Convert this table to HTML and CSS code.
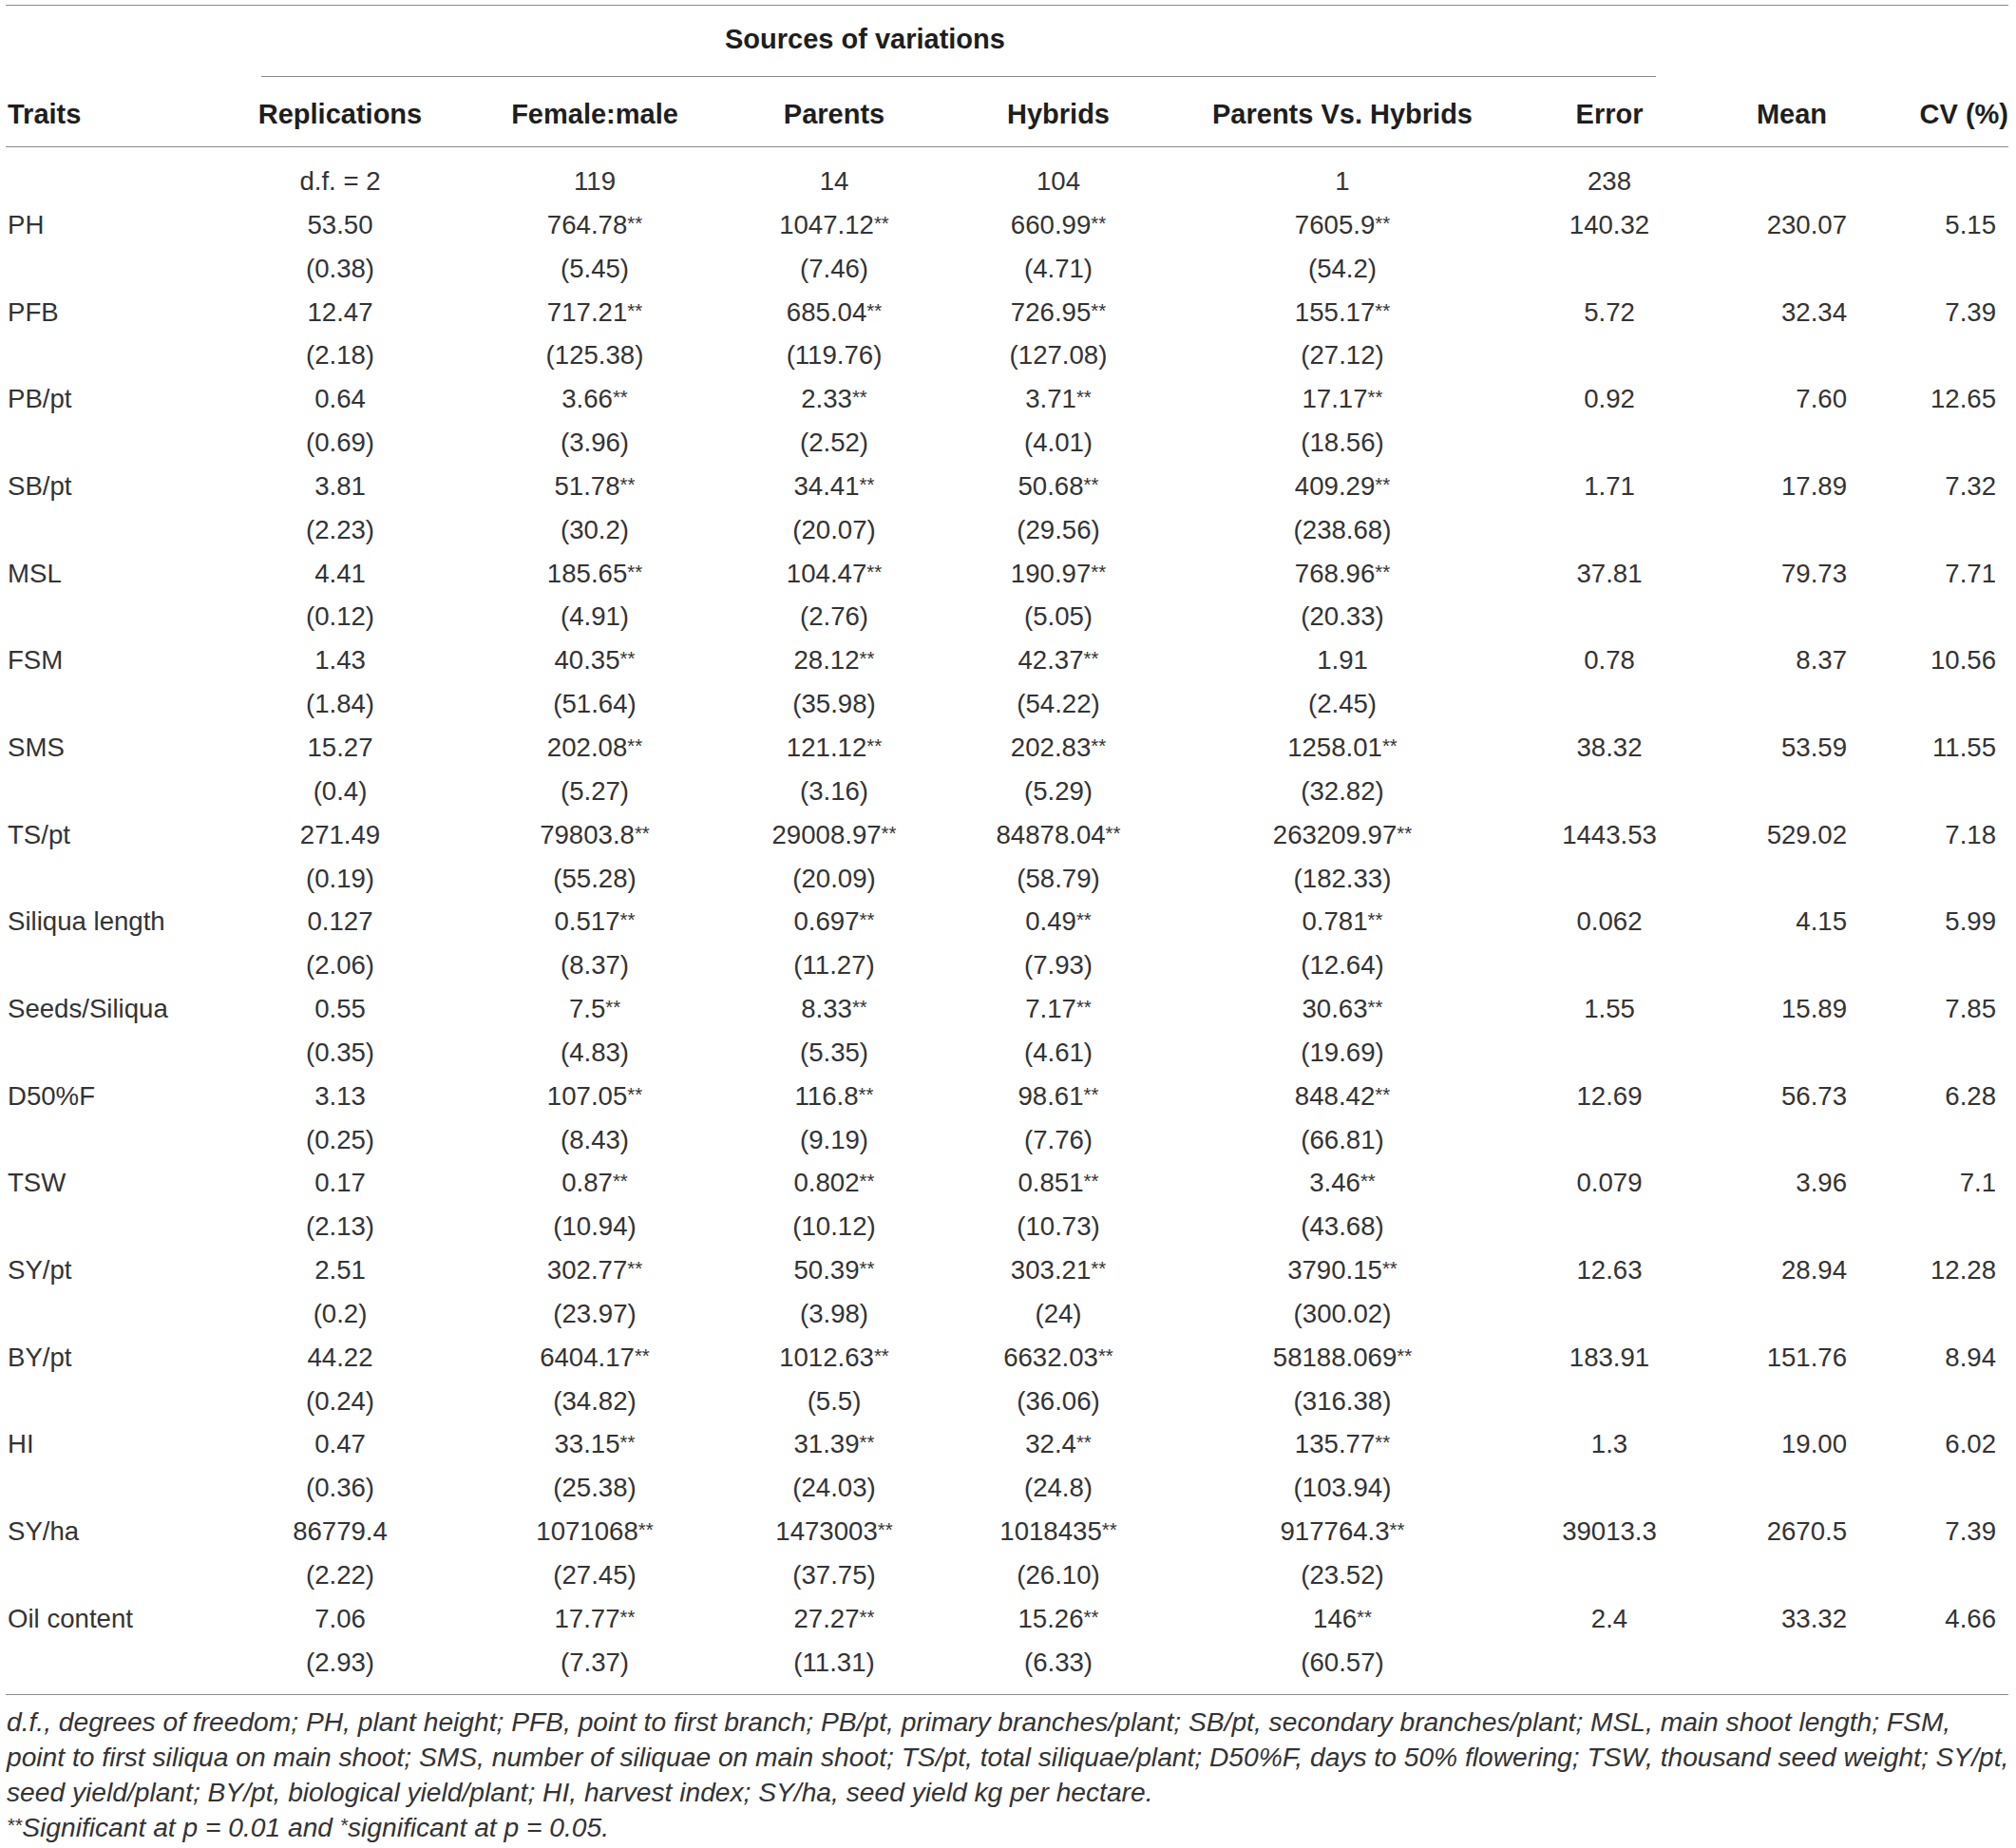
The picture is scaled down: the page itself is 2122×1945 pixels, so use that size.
FILE: index.html
```html
<!DOCTYPE html>
<html lang="en">
<head>
<meta charset="utf-8">
<title>Analysis of variance</title>
<link rel="stylesheet" href="styles.css">
</head>
<body>
<div class="page">
<table class="anova">
  <colgroup>
    <col class="c-trait"><col class="c-rep"><col class="c-fm"><col class="c-par"><col class="c-hyb"><col class="c-pvh"><col class="c-err"><col class="c-mean"><col class="c-cv">
  </colgroup>
  <thead>
    <tr class="h1">
      <th></th>
      <th colspan="6"><div class="span-title">Sources of variations</div></th>
      <th></th>
      <th></th>
    </tr>
    <tr class="h2">
      <th class="l">Traits</th>
      <th>Replications</th>
      <th>Female:male</th>
      <th>Parents</th>
      <th>Hybrids</th>
      <th>Parents Vs. Hybrids</th>
      <th>Error</th>
      <th class="mean-h">Mean</th>
      <th class="cv-h">CV (%)</th>
    </tr>
  </thead>
  <tbody>
    <tr class="first"><td class="l"></td><td>d.f. = 2</td><td>119</td><td>14</td><td>104</td><td>1</td><td>238</td><td class="mean"></td><td class="cv"></td></tr>
    <tr><td class="l">PH</td><td>53.50</td><td>764.78<sup>**</sup></td><td>1047.12<sup>**</sup></td><td>660.99<sup>**</sup></td><td>7605.9<sup>**</sup></td><td>140.32</td><td class="mean">230.07</td><td class="cv">5.15</td></tr>
    <tr><td class="l"></td><td>(0.38)</td><td>(5.45)</td><td>(7.46)</td><td>(4.71)</td><td>(54.2)</td><td></td><td class="mean"></td><td class="cv"></td></tr>
    <tr><td class="l">PFB</td><td>12.47</td><td>717.21<sup>**</sup></td><td>685.04<sup>**</sup></td><td>726.95<sup>**</sup></td><td>155.17<sup>**</sup></td><td>5.72</td><td class="mean">32.34</td><td class="cv">7.39</td></tr>
    <tr><td class="l"></td><td>(2.18)</td><td>(125.38)</td><td>(119.76)</td><td>(127.08)</td><td>(27.12)</td><td></td><td class="mean"></td><td class="cv"></td></tr>
    <tr><td class="l">PB/pt</td><td>0.64</td><td>3.66<sup>**</sup></td><td>2.33<sup>**</sup></td><td>3.71<sup>**</sup></td><td>17.17<sup>**</sup></td><td>0.92</td><td class="mean">7.60</td><td class="cv">12.65</td></tr>
    <tr><td class="l"></td><td>(0.69)</td><td>(3.96)</td><td>(2.52)</td><td>(4.01)</td><td>(18.56)</td><td></td><td class="mean"></td><td class="cv"></td></tr>
    <tr><td class="l">SB/pt</td><td>3.81</td><td>51.78<sup>**</sup></td><td>34.41<sup>**</sup></td><td>50.68<sup>**</sup></td><td>409.29<sup>**</sup></td><td>1.71</td><td class="mean">17.89</td><td class="cv">7.32</td></tr>
    <tr><td class="l"></td><td>(2.23)</td><td>(30.2)</td><td>(20.07)</td><td>(29.56)</td><td>(238.68)</td><td></td><td class="mean"></td><td class="cv"></td></tr>
    <tr><td class="l">MSL</td><td>4.41</td><td>185.65<sup>**</sup></td><td>104.47<sup>**</sup></td><td>190.97<sup>**</sup></td><td>768.96<sup>**</sup></td><td>37.81</td><td class="mean">79.73</td><td class="cv">7.71</td></tr>
    <tr><td class="l"></td><td>(0.12)</td><td>(4.91)</td><td>(2.76)</td><td>(5.05)</td><td>(20.33)</td><td></td><td class="mean"></td><td class="cv"></td></tr>
    <tr><td class="l">FSM</td><td>1.43</td><td>40.35<sup>**</sup></td><td>28.12<sup>**</sup></td><td>42.37<sup>**</sup></td><td>1.91</td><td>0.78</td><td class="mean">8.37</td><td class="cv">10.56</td></tr>
    <tr><td class="l"></td><td>(1.84)</td><td>(51.64)</td><td>(35.98)</td><td>(54.22)</td><td>(2.45)</td><td></td><td class="mean"></td><td class="cv"></td></tr>
    <tr><td class="l">SMS</td><td>15.27</td><td>202.08<sup>**</sup></td><td>121.12<sup>**</sup></td><td>202.83<sup>**</sup></td><td>1258.01<sup>**</sup></td><td>38.32</td><td class="mean">53.59</td><td class="cv">11.55</td></tr>
    <tr><td class="l"></td><td>(0.4)</td><td>(5.27)</td><td>(3.16)</td><td>(5.29)</td><td>(32.82)</td><td></td><td class="mean"></td><td class="cv"></td></tr>
    <tr><td class="l">TS/pt</td><td>271.49</td><td>79803.8<sup>**</sup></td><td>29008.97<sup>**</sup></td><td>84878.04<sup>**</sup></td><td>263209.97<sup>**</sup></td><td>1443.53</td><td class="mean">529.02</td><td class="cv">7.18</td></tr>
    <tr><td class="l"></td><td>(0.19)</td><td>(55.28)</td><td>(20.09)</td><td>(58.79)</td><td>(182.33)</td><td></td><td class="mean"></td><td class="cv"></td></tr>
    <tr><td class="l">Siliqua length</td><td>0.127</td><td>0.517<sup>**</sup></td><td>0.697<sup>**</sup></td><td>0.49<sup>**</sup></td><td>0.781<sup>**</sup></td><td>0.062</td><td class="mean">4.15</td><td class="cv">5.99</td></tr>
    <tr><td class="l"></td><td>(2.06)</td><td>(8.37)</td><td>(11.27)</td><td>(7.93)</td><td>(12.64)</td><td></td><td class="mean"></td><td class="cv"></td></tr>
    <tr><td class="l">Seeds/Siliqua</td><td>0.55</td><td>7.5<sup>**</sup></td><td>8.33<sup>**</sup></td><td>7.17<sup>**</sup></td><td>30.63<sup>**</sup></td><td>1.55</td><td class="mean">15.89</td><td class="cv">7.85</td></tr>
    <tr><td class="l"></td><td>(0.35)</td><td>(4.83)</td><td>(5.35)</td><td>(4.61)</td><td>(19.69)</td><td></td><td class="mean"></td><td class="cv"></td></tr>
    <tr><td class="l">D50%F</td><td>3.13</td><td>107.05<sup>**</sup></td><td>116.8<sup>**</sup></td><td>98.61<sup>**</sup></td><td>848.42<sup>**</sup></td><td>12.69</td><td class="mean">56.73</td><td class="cv">6.28</td></tr>
    <tr><td class="l"></td><td>(0.25)</td><td>(8.43)</td><td>(9.19)</td><td>(7.76)</td><td>(66.81)</td><td></td><td class="mean"></td><td class="cv"></td></tr>
    <tr><td class="l">TSW</td><td>0.17</td><td>0.87<sup>**</sup></td><td>0.802<sup>**</sup></td><td>0.851<sup>**</sup></td><td>3.46<sup>**</sup></td><td>0.079</td><td class="mean">3.96</td><td class="cv">7.1</td></tr>
    <tr><td class="l"></td><td>(2.13)</td><td>(10.94)</td><td>(10.12)</td><td>(10.73)</td><td>(43.68)</td><td></td><td class="mean"></td><td class="cv"></td></tr>
    <tr><td class="l">SY/pt</td><td>2.51</td><td>302.77<sup>**</sup></td><td>50.39<sup>**</sup></td><td>303.21<sup>**</sup></td><td>3790.15<sup>**</sup></td><td>12.63</td><td class="mean">28.94</td><td class="cv">12.28</td></tr>
    <tr><td class="l"></td><td>(0.2)</td><td>(23.97)</td><td>(3.98)</td><td>(24)</td><td>(300.02)</td><td></td><td class="mean"></td><td class="cv"></td></tr>
    <tr><td class="l">BY/pt</td><td>44.22</td><td>6404.17<sup>**</sup></td><td>1012.63<sup>**</sup></td><td>6632.03<sup>**</sup></td><td>58188.069<sup>**</sup></td><td>183.91</td><td class="mean">151.76</td><td class="cv">8.94</td></tr>
    <tr><td class="l"></td><td>(0.24)</td><td>(34.82)</td><td>(5.5)</td><td>(36.06)</td><td>(316.38)</td><td></td><td class="mean"></td><td class="cv"></td></tr>
    <tr><td class="l">HI</td><td>0.47</td><td>33.15<sup>**</sup></td><td>31.39<sup>**</sup></td><td>32.4<sup>**</sup></td><td>135.77<sup>**</sup></td><td>1.3</td><td class="mean">19.00</td><td class="cv">6.02</td></tr>
    <tr><td class="l"></td><td>(0.36)</td><td>(25.38)</td><td>(24.03)</td><td>(24.8)</td><td>(103.94)</td><td></td><td class="mean"></td><td class="cv"></td></tr>
    <tr><td class="l">SY/ha</td><td>86779.4</td><td>1071068<sup>**</sup></td><td>1473003<sup>**</sup></td><td>1018435<sup>**</sup></td><td>917764.3<sup>**</sup></td><td>39013.3</td><td class="mean">2670.5</td><td class="cv">7.39</td></tr>
    <tr><td class="l"></td><td>(2.22)</td><td>(27.45)</td><td>(37.75)</td><td>(26.10)</td><td>(23.52)</td><td></td><td class="mean"></td><td class="cv"></td></tr>
    <tr><td class="l">Oil content</td><td>7.06</td><td>17.77<sup>**</sup></td><td>27.27<sup>**</sup></td><td>15.26<sup>**</sup></td><td>146<sup>**</sup></td><td>2.4</td><td class="mean">33.32</td><td class="cv">4.66</td></tr>
    <tr class="last"><td class="l"></td><td>(2.93)</td><td>(7.37)</td><td>(11.31)</td><td>(6.33)</td><td>(60.57)</td><td></td><td class="mean"></td><td class="cv"></td></tr>
  </tbody>
</table>
<div class="notes">
  <p class="note">d.f., degrees of freedom; PH, plant height; PFB, point to first branch; PB/pt, primary branches/plant; SB/pt, secondary branches/plant; MSL, main shoot length; FSM,<br>point to first siliqua on main shoot; SMS, number of siliquae on main shoot; TS/pt, total siliquae/plant; D50%F, days to 50% flowering; TSW, thousand seed weight; SY/pt,<br>seed yield/plant; BY/pt, biological yield/plant; HI, harvest index; SY/ha, seed yield kg per hectare.</p>
  <p class="note"><sup>**</sup>Significant at p = 0.01 and <sup>*</sup>significant at p = 0.05.</p>
</div>
</div>
</body>
</html>
```

FILE: styles.css
```css
html, body {
  margin: 0;
  padding: 0;
  background: #ffffff;
}

body {
  font-family: "Liberation Sans", Arial, sans-serif;
  color: #333333;
}

.page {
  padding: 5px 0 0 6px;
  width: 2108px;
}

.anova {
  width: 2108px;
  table-layout: fixed;
  border-collapse: collapse;
  border-top: 1px solid #8a8a8a;
  border-bottom: 1px solid #8a8a8a;
  font-size: 27.6px;
}

.c-trait { width: 214px; }
.c-rep { width: 276px; }
.c-fm { width: 260px; }
.c-par { width: 244px; }
.c-hyb { width: 228px; }
.c-pvh { width: 370px; }
.c-err { width: 192px; }
.c-mean { width: 192px; }
.c-cv { width: 132px; }

.anova th {
  padding: 0;
  font-weight: bold;
  font-size: 29px;
  color: #1e1e1e;
  text-align: center;
  vertical-align: top;
  white-space: nowrap;
}

.h1 th {
  height: 75px;
}

.span-title {
  margin: 0 47px 0 55px;
  padding: 0 0 4px 488px;
  line-height: 70px;
  text-align: left;
  border-bottom: 1px solid #8a8a8a;
}

.h2 th {
  padding-top: 5px;
  line-height: 68px;
  border-bottom: 1px solid #8a8a8a;
}

.anova th.l,
.anova td.l {
  text-align: left;
  padding-left: 2px;
}

.anova th.mean-h {
  text-align: center;
}

.anova th.cv-h {
  text-align: right;
  padding-right: 0;
}

.anova td {
  padding: 0;
  line-height: 45.85px;
  text-align: center;
  vertical-align: top;
  white-space: nowrap;
}

.anova td.mean {
  text-align: right;
  padding-right: 38px;
}

.anova td.cv {
  text-align: right;
  padding-right: 13px;
}

.anova tr.first td {
  padding-top: 13px;
}

.anova tr.last td {
  padding-bottom: 10px;
}

.anova sup {
  font-size: 0.74em;
  line-height: 0;
  vertical-align: 0.22em;
}

.notes {
  padding-top: 10px;
  padding-left: 1px;
}

.note {
  margin: 0;
  font-style: italic;
  font-size: 28.2px;
  line-height: 37px;
  white-space: nowrap;
  color: #333333;
}

.note sup {
  font-size: 0.74em;
  line-height: 0;
  vertical-align: 0.22em;
}
```
